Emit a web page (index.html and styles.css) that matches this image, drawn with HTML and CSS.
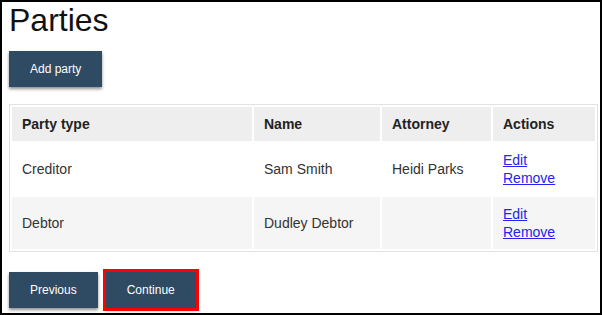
FILE: index.html
```html
<!DOCTYPE html>
<html lang="en">

<head>
    <meta charset="UTF-8">
    <title>Parties</title>
    <link rel="stylesheet" href="styles.css">
</head>

<body>
    <div class="page">
        <h1>Parties</h1>

        <button type="button" class="btn">Add party</button>

        <!-- parties table -->
        <table class="parties">
            <thead>
                <tr>
                    <th class="col-type">Party type</th>
                    <th class="col-name">Name</th>
                    <th class="col-attorney">Attorney</th>
                    <th>Actions</th>
                </tr>
            </thead>
            <tbody>
                <tr>
                    <td>Creditor</td>
                    <td>Sam Smith</td>
                    <td>Heidi Parks</td>
                    <td><a href="#">Edit</a><br><a href="#">Remove</a></td>
                </tr>
                <tr class="alt">
                    <td>Debtor</td>
                    <td>Dudley Debtor</td>
                    <td></td>
                    <td><a href="#">Edit</a><br><a href="#">Remove</a></td>
                </tr>
            </tbody>
        </table>

        <div class="nav-buttons">
            <button type="button" class="btn">Previous</button>
            <button type="button" class="btn highlight">Continue</button>
        </div>
    </div>
</body>

</html>
```

FILE: styles.css
```css
/* page */
body {
    margin: 0;
    font-family: "Liberation Sans", Arial, sans-serif;
    color: #333;
    background-color: #fff;
}

.page {
    box-sizing: border-box;
    height: 315px;
    border: 2px solid #000;
    padding: 0 3px 0 7px;
}

h1 {
    margin: 0;
    font-size: 32px;
    font-weight: normal;
    color: #111;
    line-height: 36px;
}

/* buttons */
.btn {
    display: inline-block;
    height: 36px;
    padding: 0 21px;
    margin-top: 13px;
    background-color: #2f4a63;
    color: #fff;
    border: none;
    border-radius: 0;
    box-shadow: 0 2px 3px rgba(0, 0, 0, 0.45);
    font-family: "Liberation Sans", Arial, sans-serif;
    font-size: 12px;
    cursor: pointer;
}

.nav-buttons {
    display: flex;
    gap: 8px;
    margin-top: 7px;
}

.highlight {
    outline: 3px solid #ff0000;
}

/* table */
.parties {
    margin-top: 17px;
    width: 589px;
    border: 1px solid #e2e2e2;
    border-spacing: 2px;
    table-layout: fixed;
    font-size: 14px;
}

.parties th,
.parties td {
    box-sizing: border-box;
    padding: 8px 10px;
    line-height: 18px;
    text-align: left;
    vertical-align: middle;
}

.parties th {
    background-color: #eee;
    color: #222;
}

.col-type {
    width: 240px;
}

.col-name {
    width: 126px;
}

.col-attorney {
    width: 109px;
}

.parties tr.alt td {
    background-color: #f5f5f5;
}

.parties a {
    color: #2424ee;
}
```
